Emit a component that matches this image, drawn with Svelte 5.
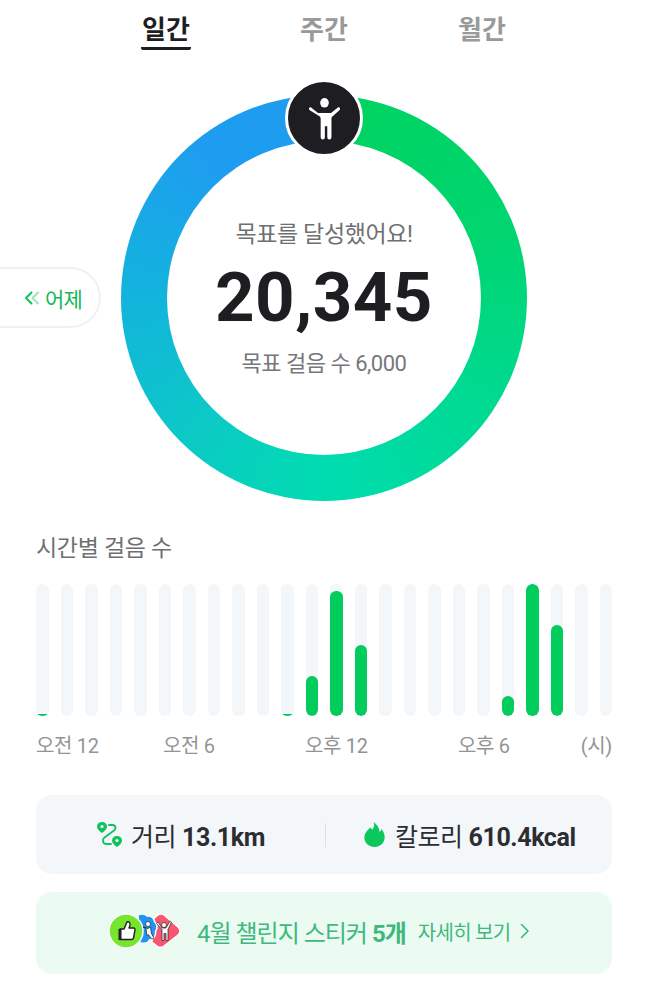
<script lang="ts">
	const tabs = ['일간', '주간', '월간'];
	// bar heights in px, one per hour
	const bars = [2, 0, 0, 0, 0, 0, 0, 0, 0, 0, 2, 40, 125, 71, 0, 0, 0, 0, 0, 20, 132, 91, 0, 0];
	const labels = [
		{ text: '오전 12', width: 127 },
		{ text: '오전 6', width: 142 },
		{ text: '오후 12', width: 153 },
		{ text: '오후 6', width: 122 }
	];
</script>

<main class="page">
	<nav class="tabs">
		{#each tabs as tab, i}
			<div class="tab" class:active={i === 0}>{tab}</div>
		{/each}
	</nav>

	<section class="ring-wrap">
		<button class="yesterday">
			<svg width="16" height="14" viewBox="0 0 16 14" fill="none" stroke-width="2" stroke-linecap="round" stroke-linejoin="round">
				<path d="M7.5 1.5 2 7l5.5 5.5" stroke="#12c25f" />
				<path d="M14 1.5 8.5 7l5.5 5.5" stroke="#9fe3bb" />
			</svg>
			어제
		</button>
		<div class="ring">
			<div class="ring-inner">
				<p class="goal-msg">목표를 달성했어요!</p>
				<p class="steps">20,345</p>
				<p class="goal">목표 걸음 수 6,000</p>
			</div>
		</div>
		<div class="badge">
			<svg width="33" height="42" viewBox="0 0 38 44" preserveAspectRatio="none" fill="#fff">
				<circle cx="19" cy="5" r="5" />
				<path d="M1.600 12.600c-.9-.9-.5-2.400.7-2.800.6-.2 1.100 0 1.600.4l6.600 4.600c1 .7 1.600 1 3 1h11c1.400 0 2-.3 3-1l6.600-4.600c.5-.4 1-.6 1.600-.4 1.200.4 1.600 1.900.7 2.800l-8 6.400c-1 .8-1.400 1.500-1.400 2.800v19.400a2.400 2.400 0 0 1-4.800 0V29.600h-2.800v11.600a2.400 2.400 0 0 1-4.800 0V21.800c0-1.300-.4-2-1.400-2.800z" />
			</svg>
		</div>
	</section>

	<h2 class="hourly">시간별 걸음 수</h2>
	<div class="chart">
		{#each bars as h}
			<div class="bar">
				{#if h}<div class="fill" style="height: {h}px"></div>{/if}
			</div>
		{/each}
	</div>
	<div class="axis">
		{#each labels as label}
			<span style="width: {label.width}px">{label.text}</span>
		{/each}
		<span class="unit">(시)</span>
	</div>

	<div class="stats">
		<div class="stat distance">
			<svg width="25" height="25" viewBox="0 0 25 25" fill="none">
				<path d="M12 3h3.500q3 0 3 3 0 1.500-1.500 2.500L7.500 15.500q-1.500 1-1.500 3 0 3.500 3 3.500H14" stroke="#12c25f" stroke-width="1.800" stroke-linecap="round" />
				<path d="M5 0C2 0 0 2 0 4.500 0 7.500 3.500 10 5 11 6.500 10 10 7.500 10 4.500 10 2 8 0 5 0z" fill="#12c25f" />
				<circle cx="5" cy="4.500" r="1.600" fill="#f3f7fa" />
				<path d="M20 14c-3 0-5 2-5 4.500 0 3 3.500 5.500 5 6.500 1.500-1 5-3.500 5-6.500 0-2.500-2-4.500-5-4.500z" fill="#12c25f" />
				<circle cx="20" cy="18.500" r="1.600" fill="#f3f7fa" />
			</svg>
			<span>거리 <b>13.1km</b></span>
		</div>
		<div class="divider"></div>
		<div class="stat calorie">
			<svg width="21" height="25" viewBox="0 0 22 27">
				<path d="M10 0c1.500 3.500.5 6-1.500 8.500C8 7.500 7.300 6.800 6.500 6 3 9 0 12.500 0 16.500 0 22.500 4.800 27 11 27s11-4.500 11-10.500c0-3.500-1.500-6.500-3.500-9-.3 1.300-.9 2.400-2 3.300C16.200 6.500 13.500 2.500 10 0z" fill="#0cc65e" />
			</svg>
			<span>칼로리 <b>610.4kcal</b></span>
		</div>
	</div>

	<div class="challenge">
		<svg class="stickers" width="74" height="38" viewBox="0 0 74 38">
			<path d="M50 3 Q53 1 56 3 L70 15 Q74 19 70 23 L56 34 Q53 36 50 35 L44 30 L44 8z" fill="#f6566f" stroke="#fff" stroke-width="1.500" />
			<path d="M30 3c3-2 7-1 9 1 4-.5 7 2 7.500 5.500 3 3 3 7 1 10 1 4-2 8-6 8.500-2 4-7 4-10 2z" fill="#2193f3" stroke="#fff" stroke-width="1.500" />
			<circle cx="18" cy="19" r="17" fill="#75e52d" stroke="#fff" stroke-width="1.500" />
			<path d="M12 17h4l3-7c2-1 3.500 1 3 3l-1 3h4.500c1.500 0 1.800 1.500 1.300 3l-1.300 7c-.3 1-1 1.500-2 1.500H12z" fill="#fff" stroke="#222" stroke-width="1.400" stroke-linejoin="round" />
			<path d="M12 17v11" stroke="#222" stroke-width="3" />
			<g fill="#fff" stroke="#222" stroke-width=".7">
				<circle cx="40" cy="12" r="2.500" />
				<path d="M35 15l5 1.500 2.500-1.500 .8 6 2.500 5-2 1-3.500-4.500-1.500 1-.8-7.500z" />
				<circle cx="56" cy="13" r="2.500" />
				<path d="M50 10l4 6h4l4-7 1.500 1-3.500 7.500v11h-2v-7h-2v7h-2v-11l-5.500-6z" />
			</g>
		</svg>
		<span class="challenge-text">4월 챌린지 스티커 <b>5개</b></span>
		<span class="more">자세히 보기</span>
		<svg width="10" height="16" viewBox="0 0 10 16" fill="none">
			<path d="M1.500 1.500 8 8l-6.500 6.500" stroke="#3eb87d" stroke-width="1.600" stroke-linecap="round" stroke-linejoin="round" />
		</svg>
	</div>
</main>

<style>
	:global(body) {
		background: #fff;
	}
	.page {
		width: 648px;
		height: 982px;
		box-sizing: border-box;
		padding: 13px 36px 0;
		font-family: Roboto, 'Noto Sans CJK KR', sans-serif;
		overflow: hidden;
	}
	.tabs {
		display: flex;
		justify-content: center;
		gap: 108px;
		height: 82px;
	}
	.tab {
		height: 37px;
		font-size: 26px;
		line-height: 34px;
		font-weight: 700;
		color: #999;
		width: 50px;
		text-align: center;
		white-space: nowrap;
	}
	.tab.active {
		box-sizing: border-box;
		color: #1e1e22;
		border-bottom: 3px solid #1e1e22;
		border-radius: 2px;
	}
	.ring-wrap {
		position: relative;
		margin: 0 -36px;
		height: 406px;
		display: flex;
		justify-content: center;
	}
	.ring {
		width: 406px;
		height: 406px;
		border-radius: 50%;
		background: conic-gradient(#00d35f 0deg, #00d570 70deg, #00d98f 120deg, #00dcb0 180deg, #0cc9c6 225deg, #12b4dc 270deg, #1e9df0 320deg, #1e9df0 358deg, #00d35f 358deg);
		display: flex;
		align-items: center;
		justify-content: center;
	}
	.ring-inner {
		width: 314px;
		height: 314px;
		border-radius: 50%;
		background: #fff;
		display: flex;
		flex-direction: column;
		align-items: center;
		box-sizing: border-box;
		padding-top: 79px;
	}
	.ring-inner p {
		margin: 0;
		white-space: nowrap;
	}
	.goal-msg {
		font-size: 23px;
		line-height: 30px;
		color: #6f6f73;
		letter-spacing: -0.4px;
	}
	.steps {
		font-size: 69px;
		line-height: 80px;
		font-weight: 700;
		color: #1e1e22;
		margin-top: 8px !important;
		letter-spacing: 0.5px;
	}
	.goal {
		font-size: 22px;
		line-height: 30px;
		color: #77777b;
		margin-top: 11px !important;
		letter-spacing: -0.5px;
	}
	.badge {
		position: absolute;
		left: 285px;
		top: -16px;
		width: 78px;
		height: 78px;
		box-sizing: border-box;
		border: 3px solid #fff;
		border-radius: 50%;
		background: #1e1e22;
		display: flex;
		align-items: center;
		justify-content: center;
		padding-top: 2px;
	}
	.yesterday {
		position: absolute;
		left: 0;
		top: 172px;
		width: 101px;
		height: 61px;
		box-sizing: border-box;
		padding: 0 0 0 24px;
		background: #fff;
		border: 2px solid #f0f1f2;
		border-left: none;
		border-radius: 0 31px 31px 0;
		display: flex;
		align-items: center;
		gap: 5px;
		font-family: inherit;
		font-size: 21px;
		color: #12b95a;
		letter-spacing: -0.8px;
	}
	.hourly {
		margin: 31px 0 0;
		font-size: 23px;
		line-height: 34px;
		font-weight: 400;
		color: #6f6f73;
		letter-spacing: -0.3px;
	}
	.chart {
		margin-top: 18px;
		display: flex;
		justify-content: space-between;
		height: 132px;
	}
	.bar {
		width: 12.5px;
		height: 132px;
		border-radius: 6px;
		background: #f3f7fa;
		display: flex;
		align-items: flex-end;
		overflow: hidden;
	}
	.fill {
		width: 100%;
		border-radius: 6px;
		background: #00cd5c;
	}
	.axis {
		display: flex;
		margin-top: 16px;
		font-size: 20px;
		line-height: 28px;
		color: #949494;
		letter-spacing: -0.3px;
	}
	.axis span {
		flex: none;
		white-space: nowrap;
	}
	.axis .unit {
		margin-left: auto;
	}
	.stats {
		margin-top: 35px;
		height: 79px;
		border-radius: 16px;
		background: #f3f7fa;
		display: flex;
		align-items: center;
		color: #2c2d33;
		font-size: 25px;
		letter-spacing: -0.4px;
	}
	.stat {
		display: flex;
		align-items: center;
		white-space: nowrap;
	}
	.distance {
		margin-left: 61px;
		gap: 9px;
	}
	.divider {
		width: 1px;
		height: 24px;
		margin-left: 60px;
		background: #dde1e4;
	}
	.calorie {
		margin-left: 38px;
		gap: 10px;
	}
	.stat b {
		font-weight: 700;
	}
	.challenge {
		margin-top: 18px;
		height: 82px;
		box-sizing: border-box;
		padding: 0 0 4px 72px;
		border-radius: 16px;
		background: #ebfbf2;
		display: flex;
		align-items: center;
		color: #3eb87d;
		white-space: nowrap;
	}
	.stickers {
		flex: none;
		margin-right: 15px;
	}
	.challenge-text {
		font-size: 24px;
		letter-spacing: -1px;
	}
	.challenge-text b {
		font-weight: 700;
	}
	.more {
		font-size: 20px;
		margin-left: 12px;
		margin-right: 9px;
		letter-spacing: -0.7px;
	}
</style>
